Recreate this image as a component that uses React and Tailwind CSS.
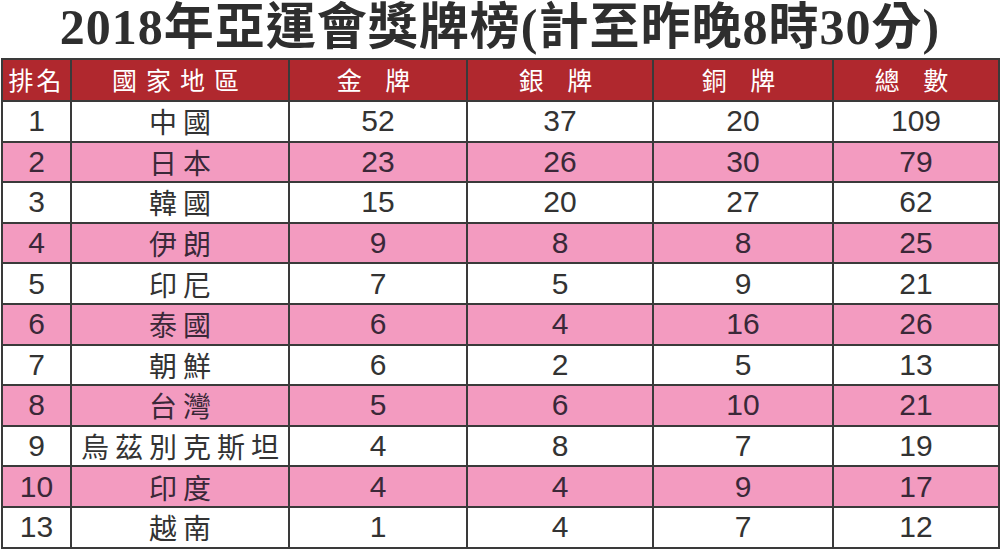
import React from 'react';

const rows = [
  ['1', '中國', '52', '37', '20', '109'],
  ['2', '日本', '23', '26', '30', '79'],
  ['3', '韓國', '15', '20', '27', '62'],
  ['4', '伊朗', '9', '8', '8', '25'],
  ['5', '印尼', '7', '5', '9', '21'],
  ['6', '泰國', '6', '4', '16', '26'],
  ['7', '朝鮮', '6', '2', '5', '13'],
  ['8', '台灣', '5', '6', '10', '21'],
  ['9', '烏茲別克斯坦', '4', '8', '7', '19'],
  ['10', '印度', '4', '4', '9', '17'],
  ['13', '越南', '1', '4', '7', '12'],
];

const headers = ['排名', '國家地區', '金 牌', '銀 牌', '銅 牌', '總 數'];
const widths = ['w-[69px]', 'w-[218px]', 'w-[178px]', 'w-[186px]', 'w-[180px]', 'w-[166px]'];

export default function App() {
  return (
    <div className="w-[1000px] h-[550px] bg-white overflow-hidden font-['Liberation_Sans','Noto_Sans_CJK_TC',sans-serif] text-[#333]">
      <h1 className="h-[58px] flex items-center justify-center text-[50px] leading-none font-bold tracking-[1px] font-['Liberation_Serif','Noto_Sans_CJK_TC',serif] text-[#2e2e2e] pb-[4px]">
        2018年亞運會獎牌榜(計至昨晚8時30分)
      </h1>
      <table className="ml-[1px] w-[997px] border-collapse table-fixed">
        <thead>
          <tr className="h-[42px] bg-[#b0282e] text-white">
            {headers.map((h, i) => (
              <th
                key={h}
                className={`${widths[i]} border-2 border-[#3a3a3a] font-normal text-[25px] font-['Noto_Sans_CJK_TC',sans-serif] ${i === 0 ? 'tracking-[3px]' : 'tracking-[9px]'}`}
              >
                {h}
              </th>
            ))}
          </tr>
        </thead>
        <tbody>
          {rows.map((r, ri) => (
            <tr key={r[0]} className={`h-[40.6px] ${ri % 2 === 1 ? 'bg-[#f39bc0] text-[#3a2838]' : 'bg-white'}`}>
              {r.map((c, ci) => (
                <td
                  key={ci}
                  className={`border-2 border-[#3a3a3a] text-center leading-none ${
                    ci === 1
                      ? "text-[28px] tracking-[6px] pl-[6px] font-['Noto_Sans_CJK_TC',sans-serif]"
                      : 'text-[30px]'
                  }`}
                >
                  {c}
                </td>
              ))}
            </tr>
          ))}
        </tbody>
      </table>
    </div>
  );
}
